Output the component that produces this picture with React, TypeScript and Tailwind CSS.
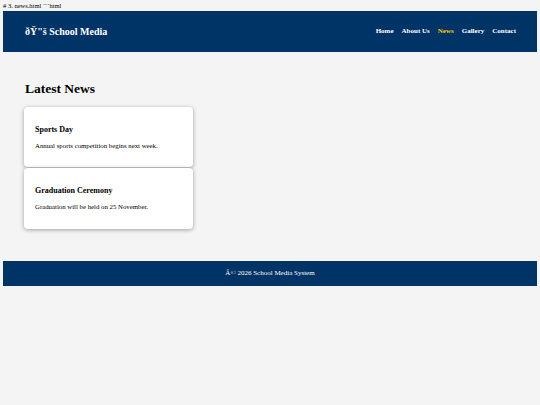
export default function App() {
  const serif = { fontFamily: '"Liberation Serif", "Times New Roman", serif' };
  return (
    <div className="min-h-[405px] w-[540px] bg-[#f4f4f4] text-black" style={serif}>
      <div className="px-[3px] pt-[2px] h-[11px] text-[6.5px] leading-[8px]">
        # 3. news.html ```html
      </div>
      <header className="mx-[3px] h-[41px] bg-[#003366] flex items-center justify-between pl-[22px] pr-[21px]">
        <div className="text-white font-bold text-[10px]">ðŸ"š School Media</div>
        <nav className="flex gap-[8px] text-[7px] font-bold text-white">
          <span>Home</span>
          <span>About Us</span>
          <span className="text-[#ffcc00]">News</span>
          <span>Gallery</span>
          <span>Contact</span>
        </nav>
      </header>
      <main className="px-[24px] pt-[29px] pb-[32px]">
        <h2 className="font-bold text-[13.5px] leading-[16px] ml-[1px] mb-[10px]">Latest News</h2>
        <div className="flex flex-col gap-[1px] w-[169px]">
          <div className="bg-white rounded-[4px] shadow-[0_1px_4px_rgba(0,0,0,0.35)] h-[60px] px-[11px] pt-[18px]">
            <div className="font-bold text-[8px] leading-[10px]">Sports Day</div>
            <div className="text-[6.8px] leading-[8px] mt-[7px]">Annual sports competition begins next week.</div>
          </div>
          <div className="bg-white rounded-[4px] shadow-[0_1px_4px_rgba(0,0,0,0.35)] h-[61px] px-[11px] pt-[18px]">
            <div className="font-bold text-[8px] leading-[10px]">Graduation Ceremony</div>
            <div className="text-[6.8px] leading-[8px] mt-[7px]">Graduation will be held on 25 November.</div>
          </div>
        </div>
      </main>
      <footer className="mx-[3px] h-[25px] bg-[#003366] flex items-center justify-center text-white text-[7px]">
        Â© 2026 School Media System
      </footer>
    </div>
  );
}
